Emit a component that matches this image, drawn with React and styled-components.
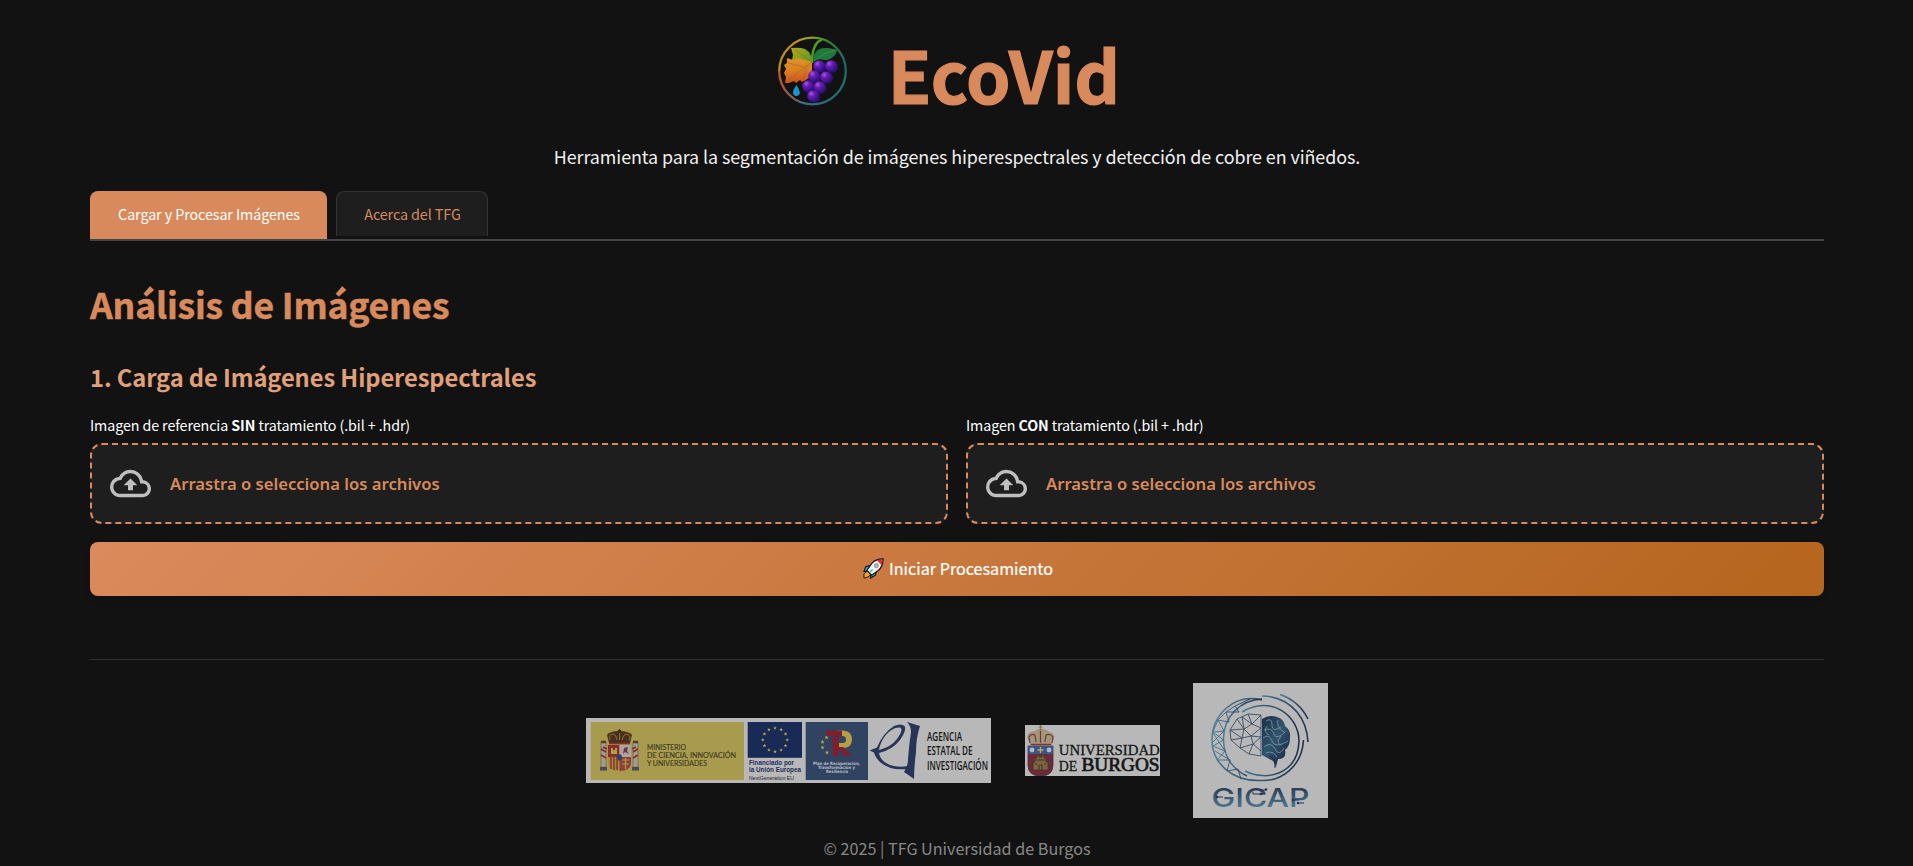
import React from 'react';
import styled, { createGlobalStyle } from 'styled-components';
import { MdOutlineBackup } from 'react-icons/md';

const sans = '"Noto Sans CJK SC", "Noto Sans", sans-serif';

const GlobalStyle = createGlobalStyle`
  * { box-sizing: border-box; }
  body {
    margin: 0;
    min-height: 100vh;
    background: #121212;
    color: #f5f5f5;
    font-family: ${sans};
  }
`;

const Page = styled.div`
  padding: 24px 89px 0 90px;
`;

const Header = styled.header`
  display: flex;
  flex-direction: column;
  align-items: center;
`;

const Brand = styled.div`
  display: flex;
  align-items: center;
  gap: 41px;
  height: 97px;
  padding-right: 16px;
`;

const BrandLogo = styled.svg`
  display: block;
  width: 69px;
  height: 70px;
  margin-bottom: 3px;
`;

const BrandName = styled.h1`
  margin: 0;
  padding-top: 2px;
  color: #d98a5c;
  font-size: 71.2px;
  font-weight: 700;
  line-height: 97px;
  letter-spacing: -0.1px;
  -webkit-text-stroke: 1.2px #d98a5c;
`;

const Tagline = styled.p`
  margin: 20px 0 0;
  color: #f0f0f0;
  font-size: 17.9px;
  line-height: 30px;
  letter-spacing: -0.08px;
  white-space: nowrap;
`;

const Tabs = styled.nav`
  display: flex;
  align-items: flex-start;
  gap: 9px;
  height: 50px;
  margin-top: 20px;
  border-bottom: 2px solid #444;
`;

const Tab = styled.button`
  width: ${p => p.$width}px;
  height: ${p => (p.$active ? 48 : 45)}px;
  padding: 0 0 ${p => (p.$active ? 3 : 0)}px 1px;
  border: 1px solid ${p => (p.$active ? '#d98a5c' : '#333')};
  border-bottom: 0;
  border-radius: 8px 8px 0 0;
  background: ${p => (p.$active ? '#d98a5c' : '#1e1e1e')};
  color: ${p => (p.$active ? '#fff' : '#d98a5c')};
  font-family: inherit;
  font-size: 14.3px;
  line-height: 44px;
  letter-spacing: -0.08px;
  white-space: nowrap;
`;

const Title = styled.h2`
  margin: 39px 0 0;
  color: #d98a5c;
  font-size: 35.5px;
  font-weight: 700;
  line-height: 48px;
  letter-spacing: -0.18px;
  -webkit-text-stroke: 0.5px #d98a5c;
`;

const Subtitle = styled.h3`
  margin: 31px 0 0;
  color: #e0a07b;
  font-size: 23.7px;
  font-weight: 700;
  line-height: 36px;
  letter-spacing: -0.09px;
`;

const Uploads = styled.section`
  display: grid;
  grid-template-columns: 1fr 1fr;
  gap: 18px;
  margin-top: 18px;
`;

const Label = styled.div`
  color: #fff;
  font-size: 14.25px;
  line-height: 24px;
  letter-spacing: -0.08px;
  white-space: nowrap;
`;

const Dropzone = styled.div`
  display: flex;
  align-items: center;
  gap: 19px;
  height: 81px;
  margin-top: 6px;
  padding-left: 18px;
  border: 2px dashed #d98a5c;
  border-radius: 12px;
  background: #1e1e1e;
  color: #bfbfbf;
`;

const DropText = styled.span`
  color: #d98a5c;
  font-family: "Noto Sans", sans-serif;
  font-size: 16.65px;
  font-weight: 600;
  line-height: 26px;
`;

const StartButton = styled.button`
  display: flex;
  align-items: center;
  justify-content: center;
  gap: 5px;
  width: 100%;
  height: 54px;
  margin-top: 18px;
  padding: 0 0 1px 2px;
  border: 0;
  border-radius: 8px;
  background: linear-gradient(135deg, #db8a5d, #b5651d);
  box-shadow: 0 4px 6px rgba(0, 0, 0, 0.12);
  color: #fff;
  font-family: inherit;
  font-size: 16.15px;
  font-weight: 400;
  line-height: 25px;
  -webkit-text-stroke: 0.2px #fff;
`;

const Footer = styled.footer`
  margin-top: 63px;
  padding-top: 23px;
  border-top: 1px solid #303030;
  text-align: center;
`;

const Sponsors = styled.div`
  display: flex;
  align-items: center;
  justify-content: center;
  gap: 33.5px;
`;

const Sponsor = styled.svg`
  display: block;
  width: ${p => p.$w}px;
  height: ${p => p.$h}px;
  background: #b8b8b8;
`;

const Copyright = styled.p`
  margin: 18px 0 0;
  color: #888;
  font-size: 16.15px;
  line-height: 24px;
`;

const grapes = [[41, 30], [53, 30], [36, 40], [48, 41], [30, 50], [41.5, 51], [35, 60]];

function Grapes() {
  return (
    <BrandLogo viewBox="0 0 69 70">
      <defs>
        <linearGradient id="ring" x1="0" y1="0.3" x2="1" y2="0.6">
          <stop offset="0" stopColor="#d87a22" />
          <stop offset="0.3" stopColor="#a3a51d" />
          <stop offset="0.65" stopColor="#2c8034" />
          <stop offset="1" stopColor="#1f6a62" />
        </linearGradient>
        <linearGradient id="ringLow" x1="0" y1="0" x2="1" y2="0">
          <stop offset="0" stopColor="#c1532b" />
          <stop offset="0.4" stopColor="#3b6c86" />
          <stop offset="1" stopColor="#206d62" />
        </linearGradient>
        <linearGradient id="leaf" x1="0.3" y1="0" x2="0.4" y2="1">
          <stop offset="0" stopColor="#e0952a" />
          <stop offset="0.5" stopColor="#dd7d22" />
          <stop offset="1" stopColor="#cc511b" />
        </linearGradient>
        <linearGradient id="leafTop" x1="0" y1="0" x2="1" y2="0.8">
          <stop offset="0" stopColor="#b5a81e" />
          <stop offset="1" stopColor="#5f9a22" />
        </linearGradient>
        <radialGradient id="grape" cx="0.35" cy="0.3" r="0.75">
          <stop offset="0" stopColor="#a65ae0" />
          <stop offset="0.35" stopColor="#6c1bb5" />
          <stop offset="1" stopColor="#2c0f78" />
        </radialGradient>
      </defs>
      <path d="M1.200 35A33.300 33.300 0 0 1 67.800 35" fill="none" stroke="url(#ring)" strokeWidth="2.300" />
      <path d="M1.200 35A33.300 33.300 0 0 0 67.800 35" fill="none" stroke="url(#ringLow)" strokeWidth="2.300" />
      <path d="M34 27C34 15 37 6 44 3.500" fill="none" stroke="#4d9b28" strokeWidth="2.500" />
      <path d="M35 24C36 14 42 9 59 14C58 20 52 25 46 24Q40 22 35 26Z" fill="#1f793b" />
      <path d="M36 25Q45 17 57 14" fill="none" stroke="#439c45" strokeWidth="0.700" />
      <path d="M34 27L14 24L15 19L13 12Q22 11 27 13L31 16L33 20Z" fill="url(#leafTop)" />
      <path d="M34 26L34 38Q31 43 26 45L24 46L22 44L18 47L16 45L11 47L7 47L8 41L6 37L8 33L6 29L9 27L9 22L15 24L20 22Z" fill="url(#leaf)" />
      <path d="M34 26L9 45M33 25L17 14M26 31L10 27M29 29L25 43" fill="none" stroke="#96701c" strokeWidth="0.700" />
      {grapes.map(([x, y]) => (
        <g key={`${x}-${y}`}>
          <circle cx={x + 1} cy={y + 0.8} r="6" fill="#291478" />
          <circle cx={x} cy={y} r="5.8" fill="url(#grape)" />
        </g>
      ))}
      <path d="M18.500 49Q15 54 15 56.500A3.300 3.300 0 0 0 21.800 56.500Q21.500 53.500 18.500 49Z" fill="#1c94cd" />
    </BrandLogo>
  );
}

function Rocket() {
  return (
    <svg width="21" height="21" viewBox="0 0 22 22">
      <path d="M5 13L1 17V21L5 20L9 17Z" fill="#f5a32b" stroke="#151515" strokeWidth="1" />
      <path d="M8 8L3 9L1 14L6 14ZM14 14L13 18L8 21L8 16Z" fill="#36b4dd" stroke="#151515" strokeWidth="1.200" />
      <path d="M21 1Q13 1 9 6L4 13L9 18L16 13Q21 9 21 1Z" fill="#f2f2f2" stroke="#151515" strokeWidth="1.300" />
      <path d="M20.500 1.500Q17 1.400 14.500 2.500L19.500 7.500Q20.500 5 20.500 1.500Z" fill="#e02c3c" />
      <circle cx="14" cy="8" r="2.200" fill="#aeb4b9" stroke="#70777d" strokeWidth="0.600" />
      <path d="M10 12L7 15" stroke="#36b4dd" strokeWidth="1.500" />
    </svg>
  );
}

function LogoText({ x, y, w, size, children, ...rest }) {
  return (
    <text x={x} y={y} fontSize={size} textLength={w} lengthAdjust="spacingAndGlyphs" {...rest}>
      {children}
    </text>
  );
}

const stars = Array.from({ length: 12 }, (_, i) => {
  const a = (i * Math.PI) / 6;
  return [189 + 12.2 * Math.sin(a), 21.8 - 11.8 * Math.cos(a)];
});

function MinistryLogo() {
  return (
    <Sponsor $w={405} $h={65} viewBox="0 0 405 65">
      <rect x="4.700" y="4" width="153.300" height="58" fill="#a99b4d" />
      {/* coat of arms */}
      <path d="M15 24H20V49H15ZM47 24H52V49H47Z" fill="#a09c92" stroke="#6d6252" strokeWidth="0.700" />
      <path d="M15 31L20 34M15 37L20 40M52 31L47 34M52 37L47 40M21 31L17 29M46 31L50 29" stroke="#842b2c" strokeWidth="1.600" />
      <path d="M14 49H21V52.500H14ZM46 49H53V52.500H46Z" fill="#464b5f" />
      <path d="M15 24H20M47 24H52" stroke="#513d2c" strokeWidth="2.500" />
      <path d="M23 25L21 17Q24 13 33 13Q43 13 46 17L44 25Z" fill="#4b3020" />
      <path d="M24 22Q22 16 28 16Q30 17 31 22M36 22Q37 17 40 16Q46 17 43 22M33.500 13V22" fill="none" stroke="#95773b" strokeWidth="0.900" />
      <path d="M33.500 11V15M31.800 12.500H35.200" stroke="#36271c" strokeWidth="1.100" />
      <path d="M23 25.500H44" stroke="#8c3026" strokeWidth="1.600" />
      <path d="M22 27H33.500V39H22Z" fill="#862d2d" />
      <path d="M33.500 27H45V39H33.500Z" fill="#aca4a0" />
      <path d="M22 39H33.500V53Q23 53 22 46Z" fill="#a78a3b" />
      <path d="M33.500 39H45V46Q44 53 33.500 53Z" fill="#8d403b" />
      <path d="M25 36V30H27V32H29V30H31V36Z" fill="#b69b45" />
      <path d="M37 36L38 30L42 29L41 33L43 36L39 34Z" fill="#693a48" />
      <path d="M25 39V51M28 39V52M31 39V52" stroke="#86302c" strokeWidth="1.400" />
      <path d="M36 42H43M36 46H43M39.500 40V51" stroke="#b29a49" strokeWidth="1.200" />
      <ellipse cx="33.500" cy="39.500" rx="2.500" ry="3.200" fill="#2d4567" />
      <g fill="#403b25" fontFamily="Lato, sans-serif" stroke="#403b25" strokeWidth="0.150">
        <LogoText x={61} y={32.300} w={39} size={8}>MINISTERIO</LogoText>
        <LogoText x={61} y={39.900} w={89} size={8}>DE CIENCIA, INNOVACIÓN</LogoText>
        <LogoText x={61} y={47.600} w={60} size={8}>Y UNIVERSIDADES</LogoText>
      </g>
      <rect x="161.700" y="4" width="54.300" height="35.800" fill="#192a56" />
      {stars.map(([x, y]) => (
        <path key={`${x}-${y}`} transform={`translate(${x} ${y})`} d="M0-1.900L.5-.6L1.800-.6L.8.3L1.200 1.600L0 .8L-1.200 1.600L-.8.3L-1.800-.6L-.5-.6Z" fill="#b3a844" />
      ))}
      <g fill="#1f2e5c" fontFamily="'Liberation Sans', sans-serif" fontWeight="700">
        <LogoText x={163} y={46.800} w={45} size={6.300}>Financiado por</LogoText>
        <LogoText x={163} y={54.300} w={52} size={6.300}>la Unión Europea</LogoText>
      </g>
      <LogoText x={163} y={61.500} w={45} size={6} fill="#252525" fontFamily="'Liberation Sans', sans-serif">NextGeneration EU</LogoText>
      <rect x="219.700" y="4" width="62.300" height="58" fill="#304360" />
      <path d="M251 12.500H257Q266 13 266 21.500Q266 30 257 30H251V25H256.500Q260 25 260 21.500Q260 18 256.500 18H251Z" fill="#b59e43" />
      <path d="M240 12.500H256V18H253V38H246.500V18H240Z" fill="#7c2030" />
      <path d="M251 29H257L266 38H258.500Z" fill="#7c2030" />
      {[[240.500, 19.500], [236.500, 24], [236.500, 29.500], [241, 34.500]].map(([x, y]) => (
        <path key={y} transform={`translate(${x} ${y})`} d="M0-2.200L.6-.7L2-.7L.9.4L1.300 1.900L0 1L-1.300 1.900L-.9.4L-2-.7L-.6-.7Z" fill="#b59e43" />
      ))}
      <g fill="#b9bfc8" fontFamily="'DejaVu Sans', sans-serif" fontWeight="700">
        <LogoText x={227} y={46.500} w={47} size={4.400}>Plan de Recuperación,</LogoText>
        <LogoText x={232} y={50.900} w={37} size={4.400}>Transformación y</LogoText>
        <LogoText x={240} y={55} w={22} size={4.400}>Resiliencia</LogoText>
      </g>
      <path d="M283.500 32.500L291 29.500Q297 15 308 8Q315 5 318.500 8Q321 12 314 22Q306 32 293 35Q294 43 304 47Q312 50 322 48V51Q304 53 294 44Q289 39 288 34.500ZM293 32Q305 29 311 21Q318 11 314 9.500Q306 9 299 18Q294 25 293 32Z" fillRule="evenodd" fill="#26345a" />
      <path d="M321 4L334 8Q330 20 330 34Q328 50 328 61L318 54Q322 49 322 41Q323 27 325 14Q325 8 321 4Z" fill="#26345a" />
      <g fill="#161616" fontFamily="'Open Sans', 'Liberation Sans', sans-serif" fontWeight="600">
        <LogoText x={341} y={23} w={35} size={13}>AGENCIA</LogoText>
        <LogoText x={341} y={37.200} w={45.500} size={13}>ESTATAL DE</LogoText>
        <LogoText x={341} y={51.700} w={61} size={13}>INVESTIGACIÓN</LogoText>
      </g>
    </Sponsor>
  );
}

function BurgosLogo() {
  return (
    <Sponsor $w={135} $h={51} viewBox="0 0 135 51">
      <path d="M5 20L2 12Q3 6 10 6Q14 3 16 4Q22 4 24 7Q30 8 29 13L27 20Z" fill="#a3967a" />
      <path d="M5 18L4 12Q6 8 10 10L11 17M27 18L28 12Q25 8 21 10L20 17M15.500 4V18" fill="none" stroke="#713b35" strokeWidth="1.200" />
      <path d="M15.500 0V6M13.500 2H17.500" stroke="#88764f" strokeWidth="1.200" />
      <path d="M6 19.500H26" stroke="#823138" strokeWidth="1.500" />
      <path d="M3 21H28V40Q28 51 15.500 51Q3 51 3 40Z" fill="#6b2b38" stroke="#4c293a" strokeWidth="0.800" />
      <path d="M3 21H28V29H3Z" fill="#3c5681" />
      <circle cx="7" cy="25" r="2.400" fill="#aebac9" />
      <circle cx="24" cy="25" r="2.400" fill="#aebac9" />
      <path d="M15.500 22V28M12.500 25H18.500" stroke="#b9ac68" strokeWidth="1.300" />
      <path d="M8 45V37H10V33H12V30H14V32H17V30H19V33H21V37H23V45Z" fill="#7a6742" stroke="#4a3427" strokeWidth="0.800" />
      <path d="M14 45V40H17V45M10 39H12M19 39H21M11 35H20" fill="none" stroke="#4a3427" strokeWidth="1" />
      <g fill="#161616" fontFamily="'Liberation Serif', serif" stroke="#161616" strokeWidth="0.300">
        <LogoText x={33.800} y={30.300} w={101} size={14.500}>UNIVERSIDAD</LogoText>
        <LogoText x={33.800} y={45.700} w={18.500} size={15}>DE</LogoText>
        <LogoText x={56.500} y={45.700} w={78} size={18} strokeWidth="0.700">BURGOS</LogoText>
      </g>
    </Sponsor>
  );
}

function GicapLogo() {
  return (
    <Sponsor $w={135} $h={135} viewBox="0 0 135 135">
      <defs>
        <linearGradient id="arc" x1="0" y1="0" x2="1" y2="0">
          <stop offset="0" stopColor="#4d7f98" />
          <stop offset="1" stopColor="#1d2c48" />
        </linearGradient>
        <linearGradient id="word" x1="0" y1="0" x2="0" y2="1">
          <stop offset="0.2" stopColor="#2b3f57" />
          <stop offset="0.9" stopColor="#527d96" />
        </linearGradient>
        <linearGradient id="lobe" x1="0" y1="0" x2="0.8" y2="1">
          <stop offset="0" stopColor="#1d2b48" />
          <stop offset="0.5" stopColor="#2f566f" />
          <stop offset="1" stopColor="#1b2744" />
        </linearGradient>
      </defs>
      <g fill="none" stroke="url(#arc)" strokeWidth="1.500">
        <path d="M69 17C41 10 19 32 19 57C19 79 38 99 69 97.500C88 98 109 84 110.500 57" />
        <path d="M69 16C48 17 30 33 30.500 57C31 77 43 88 54 93" />
        <path d="M49 29C78 11 106 33 106 58C105 91 74 99 52 88" />
        <path d="M69 13Q90 13 104 29Q114 41 115 59" />
        <path d="M87 11.500Q106 18 115 36" />
        <path d="M57 16L42 23L46 29L33 29L36 39L25 37L31 48L20 49L30.500 57L20 63L32 68L24 77L37 77L34 88L45 86L48 96M42 23L33 29M25 37L33 29M20 49L25 37M19 60L31 48M32 68L20 50M37 77L22 68M24 77L34 88" strokeWidth="0.900" />
      </g>
      <g fill="none" stroke="#34475e" strokeWidth="0.850">
        <path d="M68 32L55 31L44 36L37 47L38 57L47 65L56 71L68 73V32L59 41L49 34L51 46L37 47L49 55L38 57M49 55L51 46L59 41L68 45L58 53L49 55L47 65L60 61L68 54L58 53L60 61L56 71M60 61L68 68M59 41L55 31M51 46L58 53M44 36L51 46" />
      </g>
      <path d="M69 36Q76 31 84 34Q91 36 92 43Q98 47 97 55Q97 63 92 67Q94 76 85 76L83 84L80 78L69 72Z" fill="url(#lobe)" />
      <path d="M73 38Q79 34 79 42T88 44M71 47Q79 44 81 51T93 48M70 55Q76 50 79 58T95 58M71 64Q78 58 82 66T91 65M73 70Q80 67 84 74M85 37Q83 44 91 49M88 53Q82 60 88 62M74 43Q70 49 76 52" fill="none" stroke="#929faa" strokeWidth="0.700" />
      <path d="M76 73L82 77L82 85M86 75L81 79" fill="none" stroke="#232f46" strokeWidth="1" />
      <LogoText x={18.500} y={123.700} w={98} size={25} fontFamily="Inter, sans-serif" fontWeight="500" fill="url(#word)">GICAP</LogoText>
      <path d="M60 109V111H72M67 107H73M24 114H30M99 117H106M104 120H111" fill="none" stroke="#26354d" strokeWidth="1" />
      <g fill="#26354d">
        <circle cx="24" cy="114" r="1.300" />
        <circle cx="68" cy="111" r="1.300" />
        <circle cx="73" cy="106.500" r="1.300" />
        <circle cx="100" cy="117" r="1.300" />
        <circle cx="105" cy="120" r="1.300" />
      </g>
    </Sponsor>
  );
}

function Upload({ children }) {
  return (
    <div>
      <Label>{children}</Label>
      <Dropzone>
        <MdOutlineBackup size={41} />
        <DropText>Arrastra o selecciona los archivos</DropText>
      </Dropzone>
    </div>
  );
}

export default function App() {
  return (
    <>
      <GlobalStyle />
      <Page>
        <Header>
          <Brand>
            <Grapes />
            <BrandName>EcoVid</BrandName>
          </Brand>
          <Tagline>
            Herramienta para la segmentación de imágenes hiperespectrales y detección de cobre en viñedos.
          </Tagline>
        </Header>
        <Tabs>
          <Tab $active $width={237}>Cargar y Procesar Imágenes</Tab>
          <Tab $width={152}>Acerca del TFG</Tab>
        </Tabs>
        <main>
          <Title>Análisis de Imágenes</Title>
          <Subtitle>1. Carga de Imágenes Hiperespectrales</Subtitle>
          <Uploads>
            <Upload>Imagen de referencia <b>SIN</b> tratamiento (.bil + .hdr)</Upload>
            <Upload>Imagen <b>CON</b> tratamiento (.bil + .hdr)</Upload>
          </Uploads>
          <StartButton>
            <Rocket />
            <span>Iniciar Procesamiento</span>
          </StartButton>
        </main>
        <Footer>
          <Sponsors>
            <MinistryLogo />
            <BurgosLogo />
            <GicapLogo />
          </Sponsors>
          <Copyright>© 2025 | TFG Universidad de Burgos</Copyright>
        </Footer>
      </Page>
    </>
  );
}
